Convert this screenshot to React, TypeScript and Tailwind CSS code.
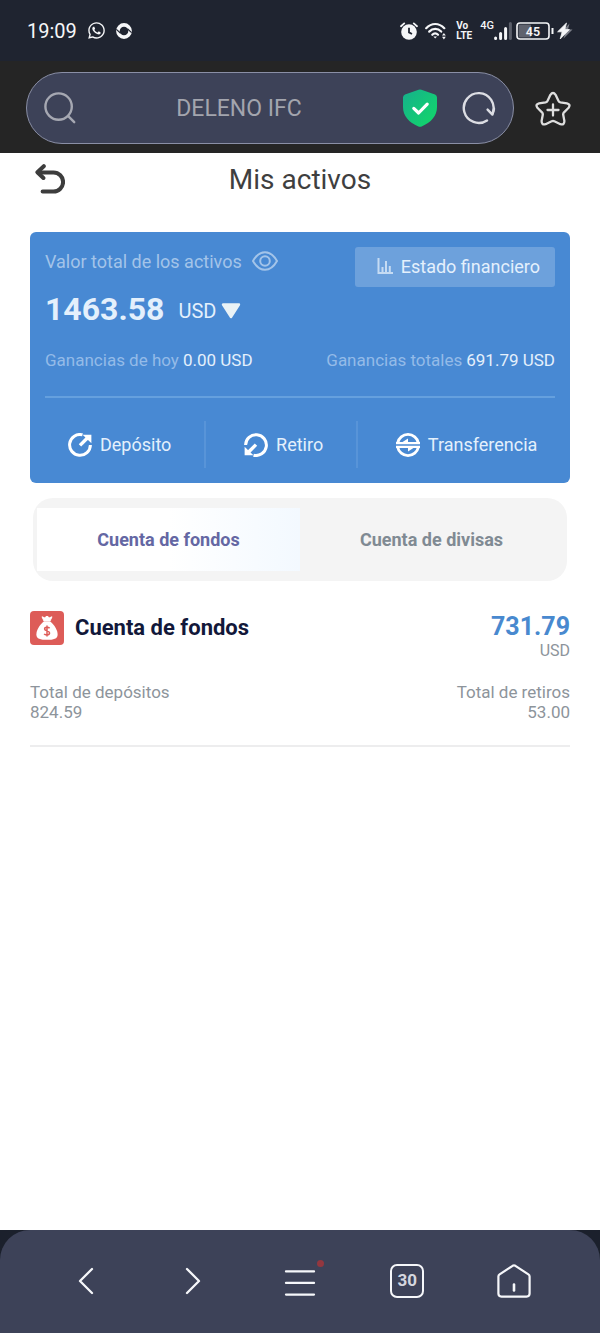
import { FaWhatsapp } from "react-icons/fa";

const StatusBar = () => {
  return (
    <div className="flex h-[61px] items-center justify-between bg-[#1f2430] px-[27px] text-[#f5f6f8]">
      <div className="flex items-center gap-[10px]">
        <span className="text-[20px] leading-6">19:09</span>
        <FaWhatsapp className="size-[19px]" />
        <svg viewBox="0 0 16 16" className="size-4">
          <circle cx="8" cy="8" r="6.1" fill="none" stroke="currentColor" strokeWidth="3.6" />
          <path d="M.4 6.4 4.6 10.2 M15.6 9.6 11.4 5.8" stroke="#1f2430" strokeWidth="1.2" />
        </svg>
      </div>
      <div className="flex items-center">
        <svg viewBox="0 0 18 18" className="size-[18px]">
          <circle cx="9" cy="10" r="7.8" fill="currentColor" />
          <path d="M1 4.2 4.2 1.4 M17 4.2 13.8 1.4" stroke="currentColor" strokeWidth="1.8" strokeLinecap="round" />
          <path d="M9 5.8V10.4L12 12" fill="none" stroke="#1f2430" strokeWidth="1.8" />
        </svg>
        <svg viewBox="0 0 21 18" className="ml-[7px] h-[18px] w-[21px]" fill="none" stroke="currentColor" strokeWidth="2.2" strokeLinecap="round">
          <path d="M1.2 6.2C6.4 .6 14 .6 19.3 6.2" />
          <path d="M4.2 9.6C7.8 6 12.8 6 16.2 9.6" />
          <path d="M7.3 12.8C9 11 11.3 11 13 12.8" />
          <path d="M8.4 14.4H12L10.2 16.6Z" fill="currentColor" stroke="none" />
          <path d="M17 13.6 18.9 11 20.8 13.6Z M17 14.8 18.9 17.4 20.8 14.8Z" fill="currentColor" stroke="none" />
        </svg>
        <span className="ml-[10px] text-[10px] leading-[10px] font-bold">
          Vo
          <br />
          LTE
        </span>
        <span className="ml-2 self-start text-[11px] leading-[10px] font-medium">4G</span>
        <svg viewBox="0 0 18 18" className="size-[18px]" strokeWidth="3" strokeLinecap="round">
          <path d="M1.6 16V16.4 M6.6 11.6V16.4 M11.6 6.6V16.4" stroke="currentColor" />
          <path d="M16.4 1.6V16.4" stroke="#5a5e69" />
        </svg>
        <svg viewBox="0 0 38 18" className="ml-1 h-[18px] w-[38px]">
          <rect x="2.6" y="2.6" width="12.4" height="12.8" rx="1" fill="#5f636e" />
          <rect x="1" y="1" width="32" height="16" rx="3" fill="none" stroke="currentColor" strokeWidth="1.6" />
          <path d="M36.5 6V12" stroke="currentColor" strokeWidth="2" />
          <text x="17" y="13.5" textAnchor="middle" fontSize="12.5" fontWeight="600" fill="currentColor">
            45
          </text>
        </svg>
        <svg viewBox="0 0 16 18" className="ml-[3px] h-[18px] w-4">
          <path d="M12.5 1.5 4 10.5H8.5L6.5 16.5 15.5 7.5H11Z" fill="#7d808a" />
          <path d="M9.5 1 .6 9.8H5.2L3.2 17 12.4 7.6H7.8Z" fill="currentColor" stroke="currentColor" strokeWidth=".8" />
        </svg>
      </div>
    </div>
  );
};

const BrowserBar = () => {
  return (
    <div className="flex items-center bg-[#252525] pt-[11px] pr-[29px] pb-[9px] pl-[26px]">
      <div className="flex h-[72px] flex-1 items-center rounded-full border border-[#8a8fa6] bg-[#3d4258] px-[17px]">
        <svg viewBox="0 0 32 32" className="size-8 shrink-0" fill="none" stroke="#a6a8b2" strokeWidth="2.4" strokeLinecap="round">
          <circle cx="14.6" cy="14.6" r="13.2" />
          <path d="M24.2 24.2 30.2 30.2" />
        </svg>
        <input
          type="text"
          aria-label="Buscar"
          defaultValue="DELENO IFC"
          className="h-10 min-w-0 flex-1 bg-transparent text-center text-[23px] text-[#a3a5ae] outline-none"
        />
        <svg viewBox="0 0 36 38" className="h-[38px] w-9 shrink-0">
          <defs>
            <linearGradient id="shield" x1="0" y1="0" x2="1" y2="1">
              <stop offset="0" stopColor="#16b08c" />
              <stop offset="1" stopColor="#12d968" />
            </linearGradient>
          </defs>
          <path
            d="M16.6 .8Q18 .2 19.4 .8L33 5.6Q35 6.4 35 8.6V18C35 27 29 33.5 19.6 37.4Q18 38 16.4 37.4C7 33.5 1 27 1 18V8.6Q1 6.4 3 5.6Z"
            fill="url(#shield)"
          />
          <path d="M11.8 19.4 16.6 24 25.2 15.2" fill="none" stroke="#fff" strokeWidth="3.2" strokeLinecap="round" strokeLinejoin="round" />
        </svg>
        <button type="button" aria-label="Recargar" className="ml-6">
          <svg viewBox="0 0 34 34" className="size-[34px]" fill="none" stroke="#dcdde3" strokeWidth="2.4" strokeLinecap="round" strokeLinejoin="round">
            <path d="M25 29.4A14.9 14.9 0 1 1 30.6 22.4" />
            <path d="M25.6 18.6 30.4 23.6 32 18" />
          </svg>
        </button>
      </div>
      <button type="button" aria-label="Favoritos" className="mt-[2px] ml-[21px]">
        <svg viewBox="0 0 36 36" className="size-9" fill="none" stroke="#dedede" strokeWidth="2.3" strokeLinecap="round" strokeLinejoin="round">
          <path d="M15.4 3.8Q18 .2 20.6 3.8L23.4 9.8Q24 11 25.4 11.3L32 12.4Q36 13.4 33.6 16.8L28.8 21.6Q28 22.5 28.2 23.8L29.4 30Q29.4 34.4 25.4 33.2L19.4 30.3Q18 29.7 16.6 30.3L10.6 33.2Q6.6 34.4 6.6 30L7.8 23.8Q8 22.5 7.2 21.6L2.4 16.8Q0 13.4 4 12.4L10.6 11.3Q12 11 12.6 9.8Z" />
          <path d="M18 13.5V24.5 M12.5 19H23.5" />
        </svg>
      </button>
    </div>
  );
};

const AssetsCard = () => {
  return (
    <section className="mx-[30px] rounded-md bg-[#4889d3] py-[15px] text-[#e4f0fc]">
      <div className="px-[15px]">
        <div className="flex items-start justify-between">
          <div className="flex h-7 items-center gap-[10px] text-[18px] text-[#a3c4e9]">
            <span>Valor total de los activos</span>
            <button type="button" aria-label="Mostrar u ocultar">
              <svg viewBox="0 0 26 20" className="h-5 w-[26px]" fill="none" stroke="currentColor" strokeWidth="2">
                <path d="M1 10C7.5-1.6 18.5-1.6 25 10C18.5 21.6 7.5 21.6 1 10Z" strokeLinejoin="round" />
                <circle cx="13" cy="10" r="4.8" />
              </svg>
            </button>
          </div>
          <button type="button" className="flex h-10 w-[200px] items-center justify-end gap-2 rounded-[3px] bg-[#6da1dc] pr-[15px] pb-[2px] text-[18px]">
            <svg viewBox="0 0 16 16" className="size-4" fill="none" stroke="#c5dbf3" strokeWidth="2">
              <path d="M1.5 0V15H16" />
              <path d="M5.5 9V14 M9 3V14 M12.8 8V14" />
            </svg>
            Estado financiero
          </button>
        </div>
        <div className="mt-[3px] flex h-[38px] items-center">
          <span className="text-[32px] font-bold">1463.58</span>
          <button type="button" className="ml-[14px] flex items-center gap-[5px] pt-1 text-[20px]">
            USD
            <svg viewBox="0 0 20 16" className="h-4 w-5">
              <path d="M2 1.5H18L10 14Z" fill="#e9f2f6" stroke="#e9f2f6" strokeWidth="2.4" strokeLinejoin="round" />
            </svg>
          </button>
        </div>
        <div className="mt-[22px] flex justify-between text-[17px] leading-5">
          <p>
            <span className="mr-1 text-[#94bbe8]">Ganancias de hoy</span>
            0.00 USD
          </p>
          <p>
            <span className="mr-1 text-[#94bbe8]">Ganancias totales</span>
            691.79 USD
          </p>
        </div>
        <hr className="mt-[26px] border-t-2 border-[#65a0de]" />
      </div>
      <div className="mt-[23px] flex h-[47px] justify-between divide-x-2 divide-[#5894d8] text-[18px]">
        <button type="button" className="flex flex-auto items-center gap-2 pl-[38px]">
          <svg viewBox="0 0 24 24" className="size-6" fill="none" stroke="#fff" strokeWidth="3">
            <path d="M14.5 1.8A10.4 10.4 0 1 0 22.4 12" />
            <path d="M12 12.4 19.6 4.8" strokeWidth="3.4" />
            <path d="M14.6 1.8H23.4V10.2Z" fill="#fff" stroke="none" />
          </svg>
          Depósito
        </button>
        <button type="button" className="flex flex-auto items-center gap-2 pl-[38px]">
          <svg viewBox="0 0 24 24" className="size-6" fill="none" stroke="#fff" strokeWidth="3">
            <path d="M9.5 22.2A10.4 10.4 0 1 0 1.6 12" />
            <path d="M12 11.6 4.4 19.2" strokeWidth="3.4" />
            <path d="M9.4 22.2H.6V13.8Z" fill="#fff" stroke="none" />
          </svg>
          Retiro
        </button>
        <button type="button" className="flex flex-auto items-center gap-2 pl-[38px]">
          <svg viewBox="0 0 24 24" className="size-6" fill="none" stroke="#fff" strokeWidth="2.8">
            <path d="M1.6 10A10.6 10.6 0 0 1 22.4 10" />
            <path d="M22.4 14A10.6 10.6 0 0 1 1.6 14" />
            <path d="M0 10.2H24 M0 13.8H24" strokeWidth="2.2" />
            <path d="M5.4 9.8 12 5.4V9.8Z M18.6 14.2 12 18.6V14.2Z" fill="#fff" stroke="none" />
          </svg>
          Transferencia
        </button>
      </div>
    </section>
  );
};

const AccountTabs = () => {
  return (
    <div className="mx-[33px] mt-[15px] flex rounded-[20px] bg-[#f4f4f4] px-1 py-[10px] text-[18px] font-bold">
      <button type="button" className="h-[63px] flex-1 bg-gradient-to-r from-white from-50% to-[#f3f9ff] text-[#6467a3]">
        Cuenta de fondos
      </button>
      <button type="button" className="h-[63px] flex-1 text-[#808a93]">
        Cuenta de divisas
      </button>
    </div>
  );
};

const FundsAccount = () => {
  return (
    <section className="mx-[30px] mt-[30px] border-b-2 border-[#ededee] pb-[23px] text-[17px] leading-5 text-[#8d949b]">
      <div className="flex justify-between">
        <div className="flex h-[34px] items-center gap-[11px]">
          <svg viewBox="0 0 34 34" className="size-[34px]">
            <rect width="34" height="34" rx="4" fill="#dd5c58" />
            <path d="M12 5.8 14.6 6.8 17 5.2 19.4 6.8 22 5.8 20 10H14Z" fill="#fff" stroke="#fff" strokeLinejoin="round" />
            <path d="M13.6 10.6H20.4C24.5 14.4 27.6 19.2 27.6 23.4C27.6 27.8 23.6 28.8 17 28.8C10.4 28.8 6.4 27.8 6.4 23.4C6.4 19.2 9.5 14.4 13.6 10.6Z" fill="#fff" />
            <path d="M19.6 17.2C18.8 16.2 14.8 15.6 14.6 18C14.5 20.4 19.7 19.4 19.6 22C19.4 24.6 15 24.2 14.2 22.8 M17 14.4V25.6" fill="none" stroke="#dd5c58" strokeWidth="1.5" />
          </svg>
          <h2 className="text-[22px] font-bold text-[#12183a]">Cuenta de fondos</h2>
        </div>
        <div className="pt-[2px] text-right">
          <p className="text-[25px] leading-7 font-bold text-[#4889cf]">731.79</p>
          <p className="text-[16px]">USD</p>
        </div>
      </div>
      <div className="mt-[21px] flex justify-between">
        <div>
          <p>Total de depósitos</p>
          <p>824.59</p>
        </div>
        <div className="text-right">
          <p>Total de retiros</p>
          <p>53.00</p>
        </div>
      </div>
    </section>
  );
};

const BottomNav = () => {
  return (
    <div className="bg-[#1b202c]">
      <nav className="grid h-[103px] grid-cols-5 items-center justify-items-center rounded-t-[30px] bg-[#3d4258] px-8 pb-[2px] text-[#f6f7fa]">
        <button type="button" aria-label="Atrás">
          <svg viewBox="0 0 16 28" className="h-7 w-4" fill="none" stroke="currentColor" strokeWidth="2.3" strokeLinecap="round" strokeLinejoin="round">
            <path d="M14 2 2 14 14 26" />
          </svg>
        </button>
        <button type="button" aria-label="Adelante">
          <svg viewBox="0 0 16 28" className="h-7 w-4" fill="none" stroke="currentColor" strokeWidth="2.3" strokeLinecap="round" strokeLinejoin="round">
            <path d="M2 2 14 14 2 26" />
          </svg>
        </button>
        <button type="button" aria-label="Menú" className="relative">
          <svg viewBox="0 0 32 32" className="size-8" stroke="currentColor" strokeWidth="2.3" strokeLinecap="round">
            <path d="M2 6.4H30 M2 17.9H30 M2 29.6H30" />
          </svg>
          <span className="absolute -top-[5px] -right-2 size-[7px] rounded-full bg-[#93373f]" />
        </button>
        <button type="button" className="flex size-[34px] items-center justify-center rounded-[7px] border-2 border-[#f6f7fa] text-[17px] font-bold text-[#d5d7df]">
          30
        </button>
        <button type="button" aria-label="Inicio">
          <svg viewBox="0 0 34 34" className="size-[34px]" fill="none" stroke="currentColor" strokeWidth="2.2" strokeLinecap="round" strokeLinejoin="round">
            <path d="M1.4 12.6Q1.4 11.2 2.6 10.4L15.6 1.8Q17 1 18.4 1.8L31.4 10.4Q32.6 11.2 32.6 12.6V29.6Q32.6 32.6 29.6 32.6H4.4Q1.4 32.6 1.4 29.6Z" />
            <path d="M17 20.5V26.5" strokeWidth="2.6" />
          </svg>
        </button>
      </nav>
    </div>
  );
};

const App = () => {
  return (
    <div className="flex min-h-screen flex-col bg-white font-['Roboto',sans-serif]">
      <StatusBar />
      <BrowserBar />
      <main className="flex-1">
        <header className="mb-[26px] grid h-[53px] grid-cols-[1fr_auto_1fr] items-center px-[35px]">
          <button type="button" aria-label="Volver" className="justify-self-start">
            <svg viewBox="0 0 30 32" className="h-8 w-[30px]" fill="none" stroke="#3d3d3d" strokeWidth="4" strokeLinecap="round" strokeLinejoin="round">
              <path d="M3 8.4H18.5A9.6 9.6 0 0 1 18.5 27.6H7.6" />
              <path d="M8.8 2.2 2.4 8.2 8.4 14" />
            </svg>
          </button>
          <h1 className="text-[28px] text-[#3f3f3f]">Mis activos</h1>
        </header>
        <AssetsCard />
        <AccountTabs />
        <FundsAccount />
      </main>
      <BottomNav />
    </div>
  );
};

export default App;
